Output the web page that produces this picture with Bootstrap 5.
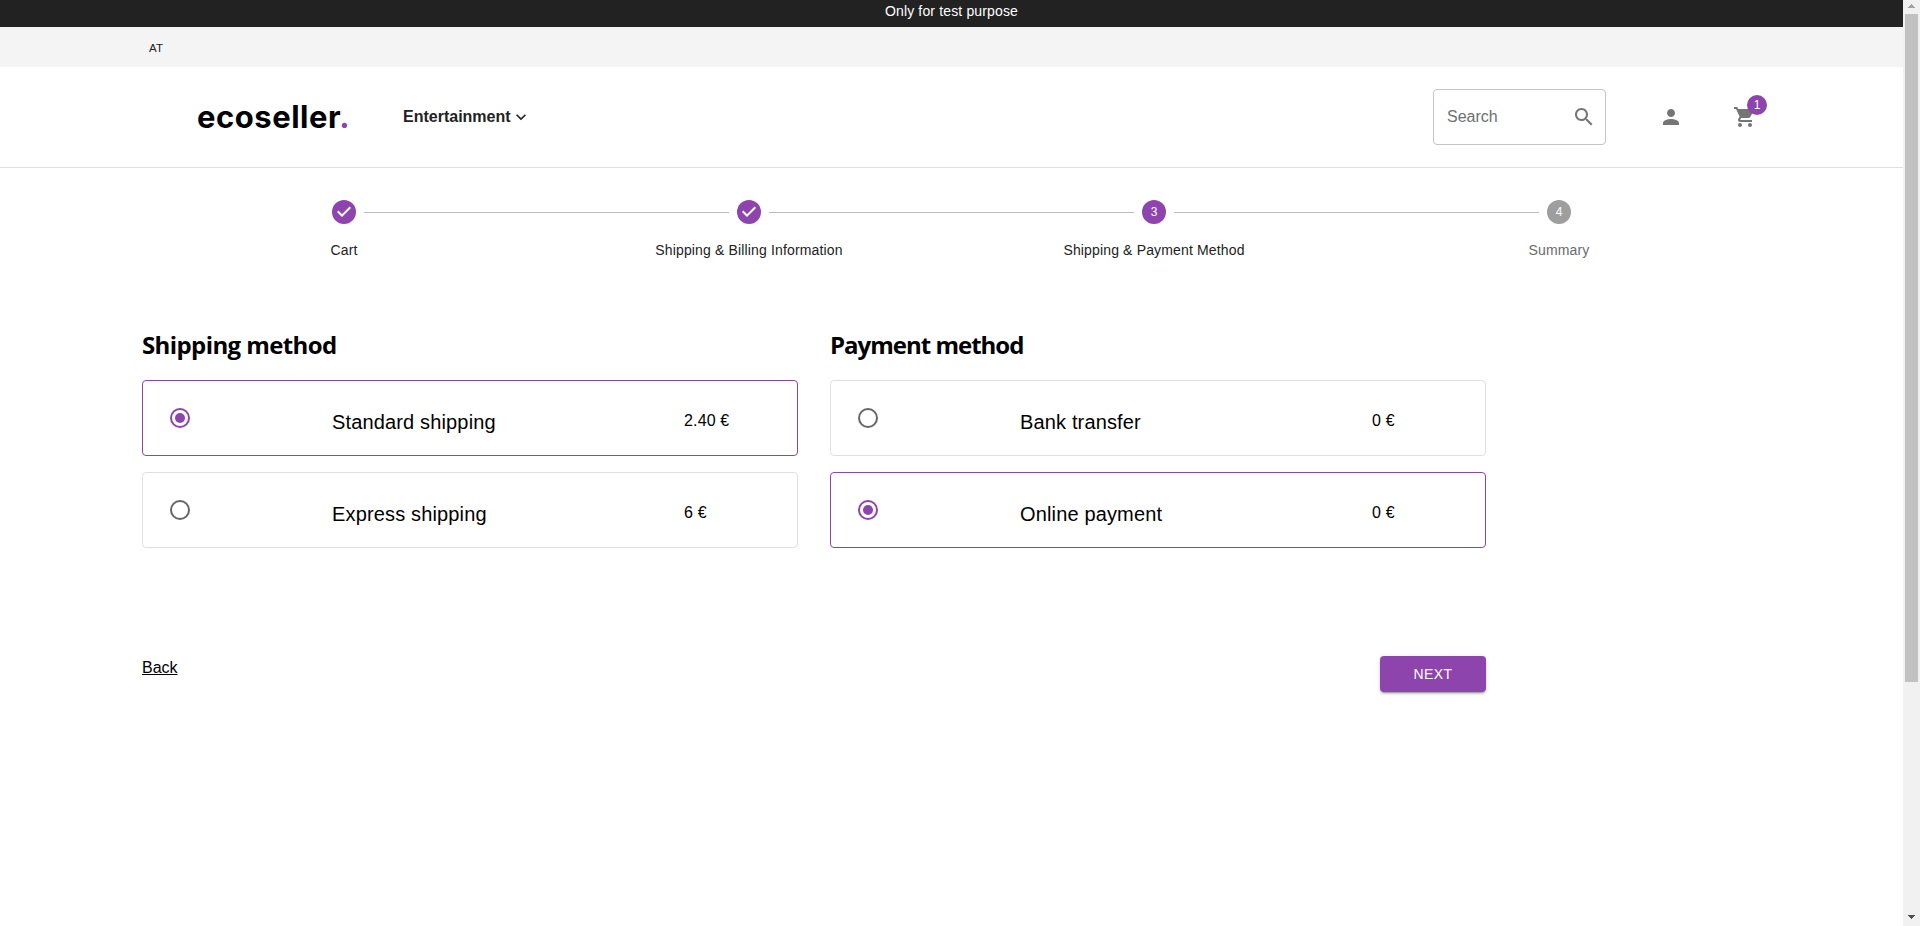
<!DOCTYPE html>
<html lang="en">
<head>
<meta charset="utf-8">
<title>ecoseller</title>
<link href="https://cdn.jsdelivr.net/npm/bootstrap@5.3.0/dist/css/bootstrap.min.css" rel="stylesheet">
<style>
:root { --brand: #8e44ad; }
body { font-family: "Liberation Sans", Arial, sans-serif; color: #000; height: 926px; overflow: hidden; background: #fff; }
.notice { height: 27px; background: #222; color: #fff; font-size: 14px; line-height: 20px; letter-spacing: .15px; padding-top: 1px; }
.lang-bar { height: 40px; background: #f4f4f4; padding: 0 149px; font-size: 11.5px; line-height: 42px; color: #222; letter-spacing: .3px; }
.site-header { height: 101px; border-bottom: 1px solid #e0e0e0; padding-left: 197px; padding-right: 146px; }
.logo { font: 650 31px/40px Inter, sans-serif; letter-spacing: .52px; width: 206px; color: #000; }
.logo span { color: var(--brand); }
.menu-link { font-size: 16px; font-weight: 700; color: #222; }
.search-box { width: 173px; height: 56px; border: 1px solid #c4c4c4; border-radius: 4px; padding: 0 9px 0 13px; color: #6f6f6f; margin-right: 53px; }
.ico { width: 24px; height: 24px; fill: #757575; flex: none; display: block; }
.cart-link { margin-left: 50px; }
.count { left: 14px; top: -10px; width: 20px; height: 20px; background: var(--brand); font-size: 12px; line-height: 20px; color: #fff; }
.steps { width: 1620px; padding-top: 32px; }
.step { width: 405px; font-size: 14px; letter-spacing: .15px; color: #222; line-height: 20px; }
.step-line { height: 1px; background: #bdbdbd; margin-top: 1px; }
.dot { width: 24px; height: 24px; background: var(--brand); color: #fff; font-size: 12px; letter-spacing: 0; line-height: 24px; margin: 0 8px; flex: none; }
.dot svg { display: block; }
.step-name { margin-top: 16px; }
.pending { color: #6b6b6b; }
.pending .dot { background: #9e9e9e; }
.checkout { margin-left: 142px; width: 1344px; padding-top: 69px; }
.methods { column-gap: 32px; }
.method-col { width: 656px; }
.method-col h2 { font: 700 24px/32px "Open Sans", "Noto Sans", sans-serif; margin: 0 0 19px; letter-spacing: -.6px; }
.method-col h2.pay-title { letter-spacing: -1px; }
.option { height: 76px; border: 1px solid #e0e0e0; border-radius: 4px; margin-bottom: 16px; padding-left: 25px; }
.option.chosen { border-color: var(--brand); }
.option .ico { fill: #666; margin-top: 25px; margin-right: 140px; }
.option.chosen .ico { fill: var(--brand); }
.option-name { width: 352px; font-size: 20px; letter-spacing: .15px; line-height: 32px; margin-top: 25px; }
.option-price { font-size: 16px; line-height: 24px; margin-top: 28px; letter-spacing: .15px; }
.actions { padding-top: 92px; }
.back-link { color: #000; font-size: 16px; line-height: 24px; }
.next-btn { width: 106px; height: 36px; padding: 0; border: 0; border-radius: 4px; background: var(--brand); color: #fff; font-size: 14px; letter-spacing: .4px; line-height: 36px; box-shadow: 0 3px 1px -2px rgba(0,0,0,.2), 0 2px 2px rgba(0,0,0,.14), 0 1px 5px rgba(0,0,0,.12); }
.scroll-rail { width: 17px; background: #f1f1f1; padding-top: 4px; padding-bottom: 7px; }
.scroll-rail .thumb { width: 13px; height: 668px; background: #c1c1c1; margin-top: 6px; }
</style>
<script src="https://cdn.jsdelivr.net/npm/bootstrap@5.3.0/dist/js/bootstrap.bundle.min.js"></script>
</head>
<body class="d-flex">
<div class="flex-grow-1">
  <div class="notice text-center">Only for test purpose</div>
  <div class="lang-bar">AT</div>
  <header class="site-header d-flex align-items-center">
    <a class="logo text-decoration-none" href="#">ecoseller<span>.</span></a>
    <a class="menu-link d-flex align-items-center text-decoration-none" href="#">Entertainment
      <svg width="20" height="20" viewBox="0 0 24 24" fill="#222"><path d="M7.41 8.59 12 13.17l4.59-4.58L18 10l-6 6-6-6z"/></svg></a>
    <div class="search-box d-flex align-items-center justify-content-between ms-auto">
      <span>Search</span>
      <svg class="ico" viewBox="0 0 24 24"><path d="M15.5 14h-.79l-.28-.27C15.41 12.59 16 11.11 16 9.5 16 5.91 13.09 3 9.5 3S3 5.91 3 9.5 5.91 16 9.5 16c1.61 0 3.09-.59 4.23-1.57l.27.28v.79l5 4.99L20.49 19l-4.99-5zm-6 0C7.01 14 5 11.99 5 9.5S7.01 5 9.5 5 14 7.01 14 9.5 11.99 14 9.5 14z"/></svg>
    </div>
    <a href="#"><svg class="ico" viewBox="0 0 24 24"><path d="M12 12c2.21 0 4-1.79 4-4s-1.79-4-4-4-4 1.79-4 4 1.79 4 4 4zm0 2c-2.67 0-8 1.34-8 4v2h16v-2c0-2.66-5.33-4-8-4z"/></svg></a>
    <a class="cart-link position-relative" href="#"><svg class="ico" viewBox="0 0 24 24"><path d="M7 18c-1.1 0-1.99.9-1.99 2S5.9 22 7 22s2-.9 2-2-.9-2-2-2zM1 2v2h2l3.6 7.59-1.35 2.45c-.16.28-.25.61-.25.96 0 1.1.9 2 2 2h12v-2H7.42c-.14 0-.25-.11-.25-.25l.03-.12.9-1.63h7.45c.75 0 1.41-.41 1.75-1.03l3.58-6.49c.08-.14.12-.31.12-.48 0-.55-.45-1-1-1H5.21l-.94-2H1zm16 16c-1.1 0-1.99.9-1.99 2s.89 2 1.99 2 2-.9 2-2-.9-2-2-2z"/></svg>
      <span class="count position-absolute rounded-circle text-center">1</span></a>
  </header>

  <div class="steps d-flex mx-auto text-center">
    <div class="step"><div class="d-flex align-items-center"><span class="flex-fill"></span><span class="dot rounded-circle"><svg viewBox="0 0 24 24"><path fill="#fff" d="M10 17 5 12l1.41-1.41L10 14.17l7.59-7.59L19 8z"/></svg></span><span class="step-line flex-fill"></span></div><div class="step-name">Cart</div></div>
    <div class="step"><div class="d-flex align-items-center"><span class="step-line flex-fill"></span><span class="dot rounded-circle"><svg viewBox="0 0 24 24"><path fill="#fff" d="M10 17 5 12l1.41-1.41L10 14.17l7.59-7.59L19 8z"/></svg></span><span class="step-line flex-fill"></span></div><div class="step-name">Shipping &amp; Billing Information</div></div>
    <div class="step"><div class="d-flex align-items-center"><span class="step-line flex-fill"></span><span class="dot rounded-circle">3</span><span class="step-line flex-fill"></span></div><div class="step-name">Shipping &amp; Payment Method</div></div>
    <div class="step pending"><div class="d-flex align-items-center"><span class="step-line flex-fill"></span><span class="dot rounded-circle">4</span><span class="flex-fill"></span></div><div class="step-name">Summary</div></div>
  </div>

  <main class="checkout">
    <div class="methods d-flex">
      <section class="method-col">
        <h2>Shipping method</h2>
        <div class="option chosen d-flex align-items-start"><svg class="ico" viewBox="0 0 24 24"><path d="M12 2a10 10 0 1 0 0 20 10 10 0 0 0 0-20zm0 18a8 8 0 1 1 0-16 8 8 0 0 1 0 16z"/><circle cx="12" cy="12" r="5"/></svg><span class="option-name">Standard shipping</span><span class="option-price">2.40 €</span></div>
        <div class="option d-flex align-items-start"><svg class="ico" viewBox="0 0 24 24"><path d="M12 2a10 10 0 1 0 0 20 10 10 0 0 0 0-20zm0 18a8 8 0 1 1 0-16 8 8 0 0 1 0 16z"/></svg><span class="option-name">Express shipping</span><span class="option-price">6 €</span></div>
      </section>
      <section class="method-col">
        <h2 class="pay-title">Payment method</h2>
        <div class="option d-flex align-items-start"><svg class="ico" viewBox="0 0 24 24"><path d="M12 2a10 10 0 1 0 0 20 10 10 0 0 0 0-20zm0 18a8 8 0 1 1 0-16 8 8 0 0 1 0 16z"/></svg><span class="option-name">Bank transfer</span><span class="option-price">0 €</span></div>
        <div class="option chosen d-flex align-items-start"><svg class="ico" viewBox="0 0 24 24"><path d="M12 2a10 10 0 1 0 0 20 10 10 0 0 0 0-20zm0 18a8 8 0 1 1 0-16 8 8 0 0 1 0 16z"/><circle cx="12" cy="12" r="5"/></svg><span class="option-name">Online payment</span><span class="option-price">0 €</span></div>
      </section>
    </div>
    <div class="actions d-flex justify-content-between align-items-start">
      <a class="back-link" href="#">Back</a>
      <button class="next-btn btn" type="button">NEXT</button>
    </div>
  </main>
</div>
<div class="scroll-rail d-flex flex-column align-items-center flex-shrink-0">
  <svg width="7" height="4" viewBox="0 0 7 4" fill="#a3a3a3" shape-rendering="crispEdges"><path d="M3 0h1v1h1v1h1v1h1v1H0V3h1V2h1V1h1z"/></svg>
  <div class="thumb"></div>
  <svg class="mt-auto" width="7" height="4" viewBox="0 0 7 4" fill="#505050" shape-rendering="crispEdges"><path d="M0 0h7v1H6v1H5v1H4v1H3V3H2V2H1V1H0z"/></svg>
</div>
</body>
</html>
